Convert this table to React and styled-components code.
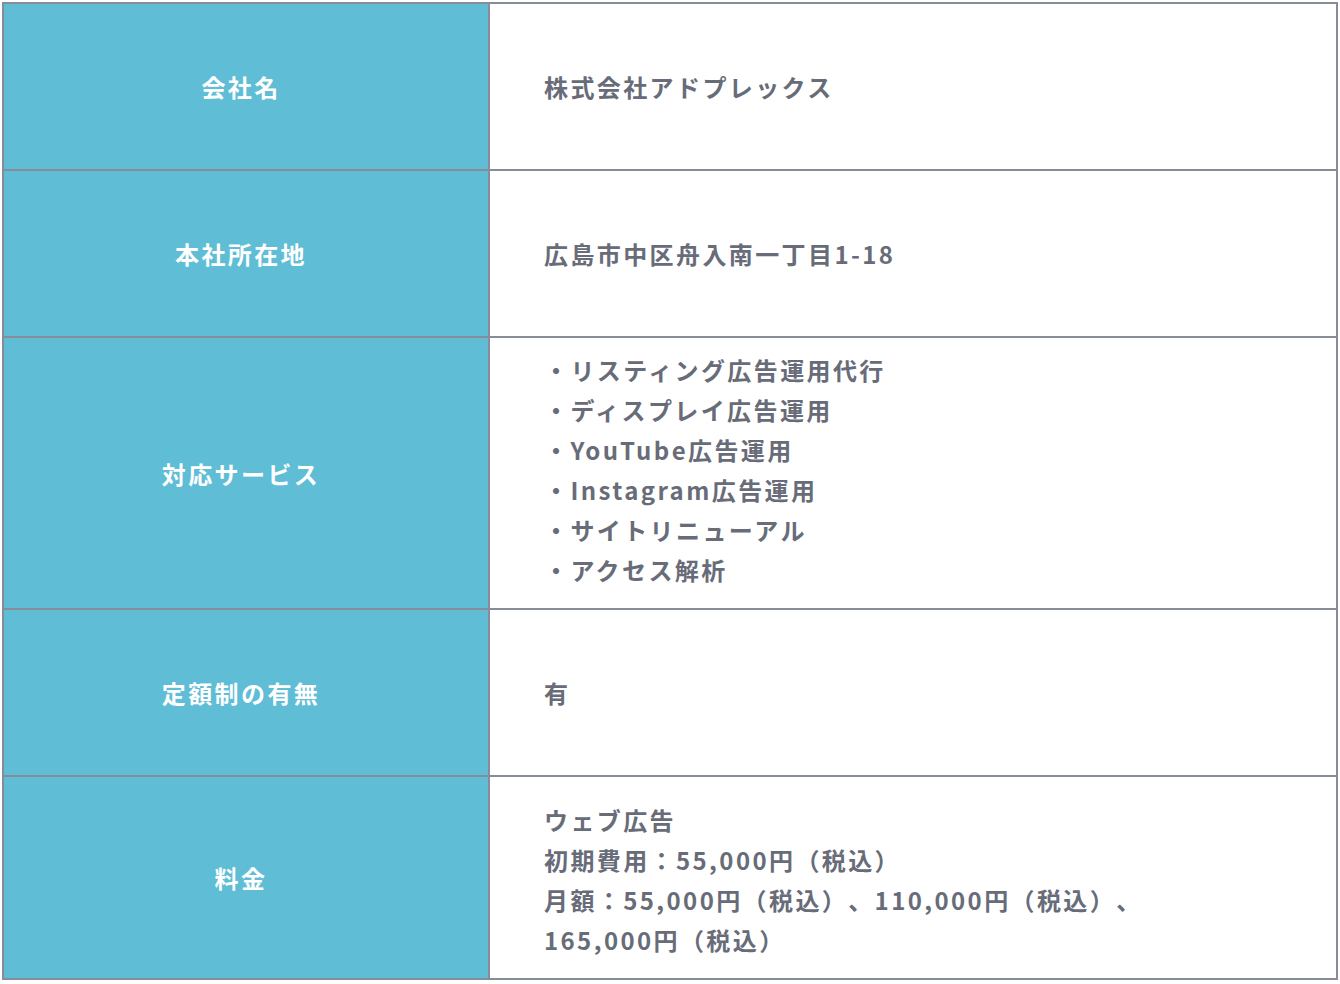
import styled, { createGlobalStyle } from 'styled-components';

const GlobalStyle = createGlobalStyle`
  html, body {
    margin: 0;
    padding: 0;
    background: #ffffff;
  }
  body {
    font-family: "Noto Sans CJK JP", "Noto Sans", sans-serif;
  }
`;

const rows = [
  { label: '会社名', height: 165, lines: ['株式会社アドプレックス'] },
  { label: '本社所在地', height: 165, lines: ['広島市中区舟入南一丁目1-18'] },
  {
    label: '対応サービス',
    height: 270,
    shift: -6,
    lines: [
      '・リスティング広告運用代行',
      '・ディスプレイ広告運用',
      '・YouTube広告運用',
      '・Instagram広告運用',
      '・サイトリニューアル',
      '・アクセス解析',
    ],
  },
  { label: '定額制の有無', height: 165, lines: ['有'] },
  {
    label: '料金',
    height: 201,
    shift: 4,
    lines: [
      'ウェブ広告',
      '初期費用：55,000円（税込）',
      '月額：55,000円（税込）、110,000円（税込）、',
      '165,000円（税込）',
    ],
  },
];

export default function App() {
  return (
    <>
      <GlobalStyle />
      <Page>
        <InfoTable>
          {rows.map((row) => (
            <Row key={row.label} $height={row.height}>
              <HeadCell>{row.label}</HeadCell>
              <BodyCell $shift={row.shift || 0}>
                {row.lines.map((line) => (
                  <Line key={line}>{line}</Line>
                ))}
              </BodyCell>
            </Row>
          ))}
        </InfoTable>
      </Page>
    </>
  );
}

const Page = styled.div`
  padding: 2px;
`;

const InfoTable = styled.div`
  border: 2px solid #868c98;
  display: flex;
  flex-direction: column;
`;

const Row = styled.div`
  display: grid;
  grid-template-columns: 486px 1fr;
  min-height: ${({ $height }) => $height}px;
  & + & {
    border-top: 2px solid #868c98;
  }
`;

const HeadCell = styled.div`
  display: flex;
  align-items: center;
  justify-content: center;
  padding-right: 10px;
  background: #5fbdd6;
  border-right: 2px solid #868c98;
  color: #ffffff;
  font-size: 24px;
  font-weight: 700;
  letter-spacing: 0.1em;
`;

const BodyCell = styled.div`
  display: flex;
  flex-direction: column;
  justify-content: center;
  padding: ${({ $shift }) => ($shift > 0 ? `${$shift}px` : 0)} 56px
    ${({ $shift }) => ($shift < 0 ? `${-$shift}px` : 0)} 54px;
  color: #686c79;
  font-size: 24px;
  font-weight: 700;
  letter-spacing: 0.1em;
  text-spacing-trim: space-all;
`;

const Line = styled.div`
  line-height: 40px;
  white-space: nowrap;
`;
